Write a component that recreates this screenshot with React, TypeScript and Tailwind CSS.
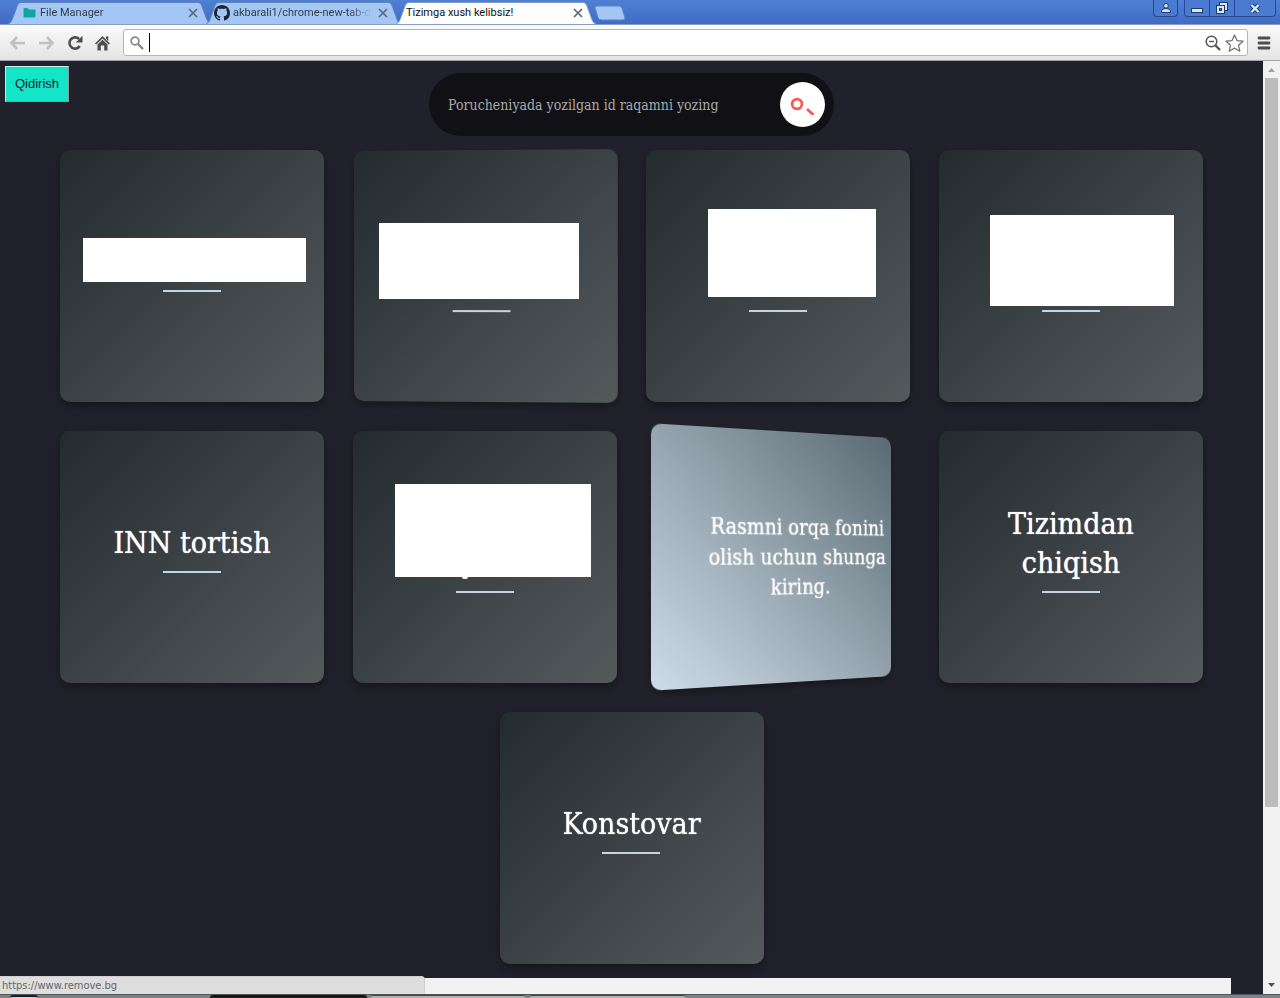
import React from "react";

type Mask = { box: string; lines: 1 | 2; tail?: boolean };
type CardData = { id: string; title?: string[]; mask?: Mask; back?: string; turning?: boolean };

const cards: CardData[] = [
  { id: "c1", mask: { box: "left-[23px] top-[88px] w-[223px] h-[44px]", lines: 1 } },
  { id: "c2", turning: true, mask: { box: "left-[26px] top-[73px] w-[200px] h-[76px]", lines: 2 } },
  { id: "c3", mask: { box: "left-[62px] top-[59px] w-[168px] h-[88px]", lines: 2 } },
  { id: "c4", mask: { box: "left-[51px] top-[65px] w-[184px] h-[91px]", lines: 2 } },
  { id: "c5", title: ["INN tortish"] },
  { id: "c6", mask: { box: "left-[42px] top-[53px] w-[196px] h-[93px]", lines: 2, tail: true } },
  { id: "c7", back: "Rasmni orqa fonini olish uchun shunga kiring." },
  { id: "c8", title: ["Tizimdan", "chiqish"] },
  { id: "c9", title: ["Konstovar"] },
];

const slab = "font-['Roboto_Slab','DejaVu_Serif_Condensed','DejaVu_Serif',serif]";
const ui = "font-['DejaVu_Sans_Condensed','Noto_Sans',sans-serif]";

function Card({ card }: { card: CardData }) {
  if (card.back) {
    return (
      <a href="https://www.remove.bg" className="block h-[252px] w-[264px] perspective-[960px]">
        <div className="flex h-full rotate-y-25 items-center justify-center rounded-[10px] bg-[linear-gradient(45deg,#cedce7_0%,#596a72_100%)] pr-[8px] shadow-[0_4px_8px_rgba(0,0,0,0.35)] transform-3d">
          <p className="w-[216px] translate-z-[60px] text-center text-[21px] leading-[28px] text-white [text-shadow:0_0_1px_#fff]">
            {card.back}
          </p>
        </div>
      </a>
    );
  }
  const textHeight = card.mask ? (card.mask.lines === 1 ? "h-[39px]" : "h-[78px]") : "";
  return (
    <a href="#" className={"relative block h-[252px] w-[264px] " + (card.turning ? "perspective-[960px]" : "")}>
      <div
        className={
          "flex h-full flex-col items-center justify-center rounded-[10px] bg-[linear-gradient(135deg,#232b2e_0%,#54595c_100%)] shadow-[0_4px_8px_rgba(0,0,0,0.35)] " +
          (card.turning ? "-rotate-y-3 transform-3d" : "")
        }
      >
        <div className={"flex flex-col items-center " + (card.turning ? "translate-z-[60px] scale-94" : "")}>
          <h2 className={"text-center text-[30px] leading-[39px] text-white [text-shadow:0_0_1px_#fff] " + textHeight}>
            {card.title?.map((line) => (
              <span key={line} className="block">{line}</span>
            ))}
          </h2>
          <span className="mt-[9px] mb-[18px] h-[2px] w-[58px] bg-[#c6d4df]" />
        </div>
      </div>
      {card.mask && <span className={"absolute bg-white " + card.mask.box} />}
      {card.mask?.tail && (
        <span className="absolute top-[146px] left-[109px] h-[2px] w-[6px] rounded-b-sm bg-white" />
      )}
    </a>
  );
}

type TabProps = { width: string; pad: string; active?: boolean; label: string; icon?: React.ReactNode };

function Tab({ width, pad, active, label, icon }: TabProps) {
  return (
    <div className={"relative -mr-[5px] flex h-[22px] items-center pr-[11px] " + width + " " + pad + (active ? " z-10" : "")}>
      <svg className="absolute inset-0 h-full w-full" viewBox="0 0 200 22" preserveAspectRatio="none" aria-hidden="true">
        <path
          d="M0 22 C3 21 4 18 5 15 L9 4 Q10 .5 13 .5 H187 Q190 .5 191 4 L195 15 C196 18 197 21 200 22"
          fill={active ? "#fdfdfd" : "#a3c6f5"}
          stroke={active ? "#7f9cc9" : "#5f84b8"}
          strokeWidth="1"
        />
      </svg>
      <span className="relative flex min-w-0 flex-1 items-center gap-[3px]">
        {icon}
        <span
          className={
            "min-w-0 flex-1 font-['Tahoma','Roboto',sans-serif] text-[11px] leading-[16px] whitespace-nowrap " +
            (active ? "text-[#111]" : "text-[#333c4a] [mask-image:linear-gradient(to_right,#000_84%,transparent)]")
          }
        >
          {label}
        </span>
      </span>
      <button aria-label={"Close " + label} className="relative ml-[5px] flex h-[14px] w-[14px] items-center justify-center">
        <svg width="10" height="10" viewBox="0 0 10 10" stroke="#5c6470" strokeWidth="1.6" aria-hidden="true">
          <path d="M1 1 L9 9 M9 1 L1 9" />
        </svg>
      </button>
    </div>
  );
}

function WindowButtons() {
  const box = "flex h-[17px] items-center justify-center border border-t-0 border-[#27498f] bg-[#4a7bd0]";
  return (
    <div className="mr-[4px] flex items-start">
      <button aria-label="Profile" className={box + " mr-[6px] w-[25px] rounded-b-[4px]"}>
        <svg width="12" height="12" viewBox="0 0 12 12" fill="#dbe8fb" stroke="#1e3a72" strokeWidth="1" aria-hidden="true">
          <path d="M1.5 10.5 V9 Q2 6.5 6 6.5 Q10 6.5 10.500 9 V10.500 Z" />
          <circle cx="6" cy="3.800" r="2.300" />
        </svg>
      </button>
      <button aria-label="Minimize" className={box + " w-[26px] rounded-bl-[4px]"}>
        <svg width="12" height="12" viewBox="0 0 12 12" aria-hidden="true">
          <rect x=".5" y="6.500" width="11" height="4" fill="#dbe8fb" stroke="#1e3a72" />
        </svg>
      </button>
      <button aria-label="Restore" className={box + " w-[25px] border-l-0"}>
        <svg width="14" height="13" viewBox="0 0 14 13" fill="#dbe8fb" stroke="#1e3a72" strokeWidth="1" aria-hidden="true">
          <rect x="4.500" y=".5" width="8" height="8" />
          <rect x="1.500" y="3.500" width="8" height="8" />
          <rect x="4.500" y="6.500" width="2" height="2" fill="#4a7bd0" />
        </svg>
      </button>
      <button aria-label="Close window" className={box + " w-[41px] rounded-br-[4px] border-l-0"}>
        <svg width="12" height="11" viewBox="0 0 12 11" aria-hidden="true">
          <path d="M2.500 2 L9.500 9 M9.500 2 L2.500 9" stroke="#1e3a72" strokeWidth="4.400" />
          <path d="M2.500 2 L9.500 9 M9.500 2 L2.500 9" stroke="#dbe8fb" strokeWidth="2.400" />
        </svg>
      </button>
    </div>
  );
}

const folderIcon = (
  <svg className="mr-[1px] shrink-0" width="13" height="10" viewBox="0 0 13 10" aria-hidden="true">
    <path d="M1.500 0 H4.500 L6 1.500 H11.500 Q12.500 1.500 12.500 2.500 V8.500 Q12.500 9.500 11.500 9.500 H1.500 Q.5 9.500 .5 8.500 V1 Q.5 0 1.500 0Z" fill="#12a5a0" />
  </svg>
);

const githubIcon = (
  <svg className="shrink-0" width="16" height="16" viewBox="0 0 16 16" fill="#1b2733" aria-hidden="true">
    <path d="M8 0C3.580 0 0 3.580 0 8c0 3.540 2.290 6.530 5.470 7.590.4.070.55-.17.55-.38 0-.19-.01-.82-.01-1.490-2.010.37-2.530-.49-2.690-.94-.09-.23-.48-.94-.82-1.130-.28-.15-.68-.52-.01-.53.63-.01 1.080.58 1.230.82.72 1.210 1.870.87 2.330.66.07-.52.28-.87.51-1.070-1.780-.2-3.640-.89-3.640-3.950 0-.87.31-1.590.82-2.150-.08-.2-.36-1.020.08-2.120 0 0 .67-.21 2.200.82.64-.18 1.320-.27 2-.27s1.360.09 2 .27c1.530-1.040 2.200-.82 2.200-.82.44 1.100.16 1.920.08 2.120.51.56.82 1.270.82 2.150 0 3.070-1.870 3.750-3.650 3.950.29.25.54.73.54 1.480 0 1.070-.01 1.930-.01 2.200 0 .21.15.46.55.38A8.010 8.010 0 0 0 16 8c0-4.420-3.580-8-8-8z" />
  </svg>
);

function Toolbar() {
  return (
    <div className="flex h-[36px] items-center border-b border-[#a5a5a5] bg-linear-to-b from-[#fafafa] to-[#e4e4e4] pr-[9px] pl-[9px]">
      <nav className="flex items-center gap-[12px]">
        <button aria-label="Back">
          <svg width="17" height="16" viewBox="0 0 17 16" fill="none" stroke="#c1c1c1" strokeWidth="2.600" aria-hidden="true"><path d="M8 2 L2.500 8 L8 14 M2.500 8 H16" /></svg>
        </button>
        <button aria-label="Forward">
          <svg width="17" height="16" viewBox="0 0 17 16" fill="none" stroke="#c1c1c1" strokeWidth="2.600" aria-hidden="true"><path d="M9 2 L14.500 8 L9 14 M14.500 8 H1" /></svg>
        </button>
        <button aria-label="Reload">
          <svg width="16" height="16" viewBox="0 0 16 16" aria-hidden="true">
            <path d="M12.800 11 A5.600 5.600 0 1 1 12 4" fill="none" stroke="#4d4d4d" strokeWidth="2.600" />
            <path d="M15.500 .8 V7.500 H8.800Z" fill="#4d4d4d" />
          </svg>
        </button>
        <button aria-label="Home">
          <svg width="15" height="16" viewBox="0 0 15 16" fill="#4d4d4d" aria-hidden="true">
            <path d="M7.500 1 L15 8.500 L13.700 9.600 L7.500 3.600 L1.300 9.600 L0 8.500Z M11 1.500 H13.300 V6 L11 3.800Z M2.500 9.500 L7.500 4.700 L12.500 9.500 V15.500 H9.200 V10.500 H5.800 V15.500 H2.500Z" />
          </svg>
        </button>
      </nav>
      <div className="ml-[13px] flex h-[27px] flex-1 items-center rounded-[3px] border border-[#b5b5b5] bg-white pr-[3px] pl-[6px]">
        <svg width="14" height="14" viewBox="0 0 14 14" fill="none" stroke="#868686" aria-hidden="true">
          <circle cx="5" cy="5" r="3.900" strokeWidth="1.700" />
          <path d="M8 8 L13 13" strokeWidth="2.400" />
        </svg>
        <span className="ml-[5px] h-[19px] w-px bg-black" />
        <input aria-label="Address" className="h-[20px] min-w-0 flex-1 bg-transparent px-1 text-[13px] outline-none" />
        <button aria-label="Zoom">
          <svg width="16" height="16" viewBox="0 0 16 16" fill="none" stroke="#555" aria-hidden="true">
            <circle cx="6.500" cy="6.500" r="5.300" strokeWidth="1.500" />
            <path d="M4 6.500 H9" strokeWidth="1.400" />
            <path d="M10.500 10.500 L15 15" strokeWidth="2.400" />
          </svg>
        </button>
        <button aria-label="Bookmark" className="ml-[4px]">
          <svg width="19" height="18" viewBox="0 0 19 18" fill="#fff" stroke="#6e6e6e" strokeWidth="1.200" strokeLinejoin="round" aria-hidden="true">
            <path d="M9.500 1 L12 6.600 L18 7.200 L13.500 11.200 L14.800 17.200 L9.500 14 L4.200 17.200 L5.500 11.200 L1 7.200 L7 6.600Z" />
          </svg>
        </button>
      </div>
      <button aria-label="Menu" className="ml-[9px]">
        <svg width="14" height="14" viewBox="0 0 14 14" stroke="#4d4d4d" strokeWidth="2.800" strokeLinecap="round" aria-hidden="true">
          <path d="M2 2 H12 M2 7 H12 M2 12 H12" />
        </svg>
      </button>
    </div>
  );
}

function Scrollbar() {
  return (
    <div className="flex w-[17px] shrink-0 flex-col items-center bg-[#f1f1f1]" aria-hidden="true">
      <svg width="17" height="17" viewBox="0 0 17 17"><path d="M5 11 L8.500 7 L12 11Z" fill="#a3a3a3" /></svg>
      <div className="w-[13px] grow-[730] bg-[#bcbcbc]" />
      <div className="grow-[170]" />
      <svg width="17" height="17" viewBox="0 0 17 17"><path d="M5 6 L8.500 10 L12 6Z" fill="#505050" /></svg>
    </div>
  );
}

export default function App() {
  return (
    <div className={"flex h-screen flex-col overflow-hidden bg-[#21212b] " + ui}>
      <header className="shrink-0">
        <div className="flex h-[25px] items-start justify-between border-b border-[#8ba0bf] bg-linear-to-b from-[#4f80d3] to-[#3f6cc5]">
          <div className="flex items-center pt-[2px] pl-[8px]">
            <Tab width="w-[203px]" pad="pl-[15px]" label="File Manager" icon={folderIcon} />
            <Tab width="w-[195px]" pad="pl-[8px]" label="akbarali1/chrome-new-tab-d" icon={githubIcon} />
            <Tab width="w-[200px]" pad="pl-[10px]" label="Tizimga xush kelibsiz!" active />
            <button aria-label="New tab" className="ml-[3px]">
              <svg width="32" height="16" viewBox="0 0 32 16" aria-hidden="true">
                <path d="M3 1 H25 Q27 1 28 3 L31 13 Q31 15 29 15 H8 Q5 15 4 13 L1 3 Q1 1 3 1Z" fill="#a3c6f5" stroke="#5a83c6" />
              </svg>
            </button>
          </div>
          <WindowButtons />
        </div>
        <Toolbar />
      </header>

      <div className="relative flex min-h-0 flex-1">
        <main className={"flex min-w-0 flex-1 flex-col overflow-hidden " + slab}>
          <div className="grid grid-cols-[1fr_auto_1fr] items-start px-[5px] pt-[5px]">
            <button className="h-[36px] w-[64px] justify-self-start border border-t-[#b8f5e8] border-r-[#8a9a9a] border-b-[#8a9a9a] border-l-[#b8f5e8] bg-[#14e5c8] font-['Liberation_Sans',Arial,sans-serif] text-[13px] text-[#10222a]">
              Qidirish
            </button>
            <form className="mt-[7px] flex h-[63px] w-[405px] items-center rounded-full bg-[#111115] pr-[9px] pl-[19px]">
              <input
                aria-label="Id raqam"
                placeholder="Porucheniyada yozilgan id raqamni yozing"
                className="h-[40px] min-w-0 flex-1 bg-transparent text-[14px] text-white outline-none placeholder:text-[#a9a9a9]"
              />
              <button type="button" aria-label="Izlash" className="flex h-[45px] w-[45px] items-center justify-center rounded-full bg-white">
                <svg width="25" height="21" viewBox="0 0 25 21" fill="none" stroke="#fb5b53" aria-hidden="true">
                  <circle cx="7" cy="10" r="4.900" strokeWidth="2.800" />
                  <path d="M17 15 L23.500 21" strokeWidth="2.800" />
                </svg>
              </button>
            </form>
          </div>
          <section className="flex flex-wrap justify-center gap-[29px] px-[60px] pt-[14px]">
            {cards.map((card) => (
              <Card key={card.id} card={card} />
            ))}
          </section>
          <footer className="mt-[14px] mr-[32px] min-h-[16px] flex-1 bg-[#f1f1f1]" />
        </main>
        <Scrollbar />
        <div className="absolute bottom-0 left-0 h-[18px] w-[425px] rounded-tr-[4px] border-t border-r border-[#cfcfcf] bg-[#dedede] pl-[2px] text-[11px] leading-[17px] text-[#666]">
          https://www.remove.bg
        </div>
      </div>

      <div className="flex h-[4px] shrink-0 border-t border-[#505555] bg-[#7d8282]" aria-hidden="true">
        <span className="ml-[10px] w-[28px] rounded-t-full border-t-2 border-[#10222e] bg-[#bcd6e4]" />
        <span className="ml-[172px] w-[157px] rounded-t-sm border-t-2 border-[#151515] bg-[#222]" />
        <span className="ml-[3px] w-[156px] rounded-t-sm border-t border-[#444] bg-[#b3b3b3]" />
        <span className="ml-[3px] w-[157px] rounded-t-sm border-t border-[#444] bg-[#b3b3b3]" />
      </div>
    </div>
  );
}
